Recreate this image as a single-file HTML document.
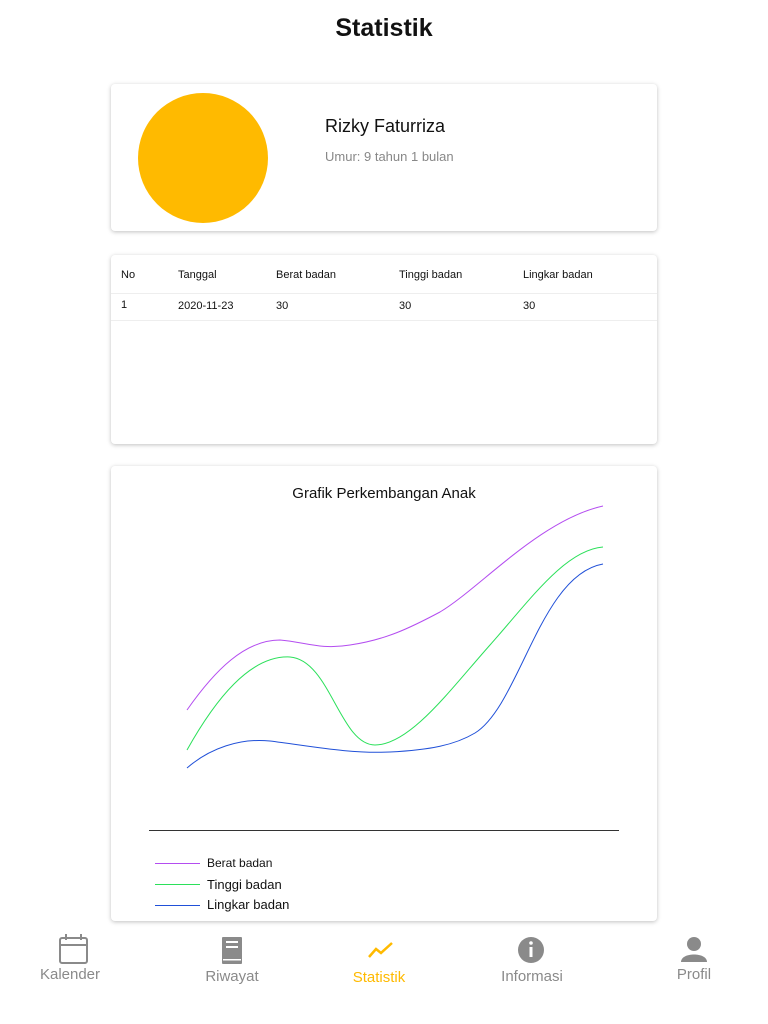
<!DOCTYPE html>
<html><head><style>
body{margin:0;width:768px;height:1024px;background:#fff;font-family:"Liberation Sans",sans-serif;position:relative;overflow:hidden}
.card{position:absolute;left:111px;width:546px;background:#fff;border-radius:4px;box-shadow:0 1px 4px rgba(0,0,0,.25)}
.t{position:absolute;font-size:11px;color:#111}
.nav{position:absolute;text-align:center;font-size:15px;color:#8a8a8a;width:120px}
</style></head><body>
<div style="position:absolute;top:14px;width:768px;text-align:center;font-size:25px;font-weight:bold;color:#111">Statistik</div>
<div class="card" style="top:84px;height:147px">
 <div style="position:absolute;left:27px;top:9px;width:130px;height:130px;border-radius:50%;background:#ffba00"></div>
 <div style="position:absolute;left:214px;top:32px;font-size:18px;color:#111">Rizky Faturriza</div>
 <div style="position:absolute;left:214px;top:65px;font-size:13px;color:#888">Umur: 9 tahun 1 bulan</div>
</div>
<div class="card" style="top:255px;height:189px">
 <div class="t" style="left:10px;top:14px">No</div><div class="t" style="left:67px;top:14px">Tanggal</div><div class="t" style="left:165px;top:14px">Berat badan</div><div class="t" style="left:288px;top:14px">Tinggi badan</div><div class="t" style="left:412px;top:14px">Lingkar badan</div>
 <div style="position:absolute;left:0;right:0;top:38px;border-top:1px solid #eee"></div>
 <div class="t" style="left:10px;top:44px">1</div><div class="t" style="left:67px;top:45px">2020-11-23</div><div class="t" style="left:165px;top:45px">30</div><div class="t" style="left:288px;top:45px">30</div><div class="t" style="left:412px;top:45px">30</div>
 <div style="position:absolute;left:0;right:0;top:65px;border-top:1px solid #eee"></div>
</div>
<div class="card" style="top:466px;height:455px"></div>
<div style="position:absolute;top:485px;left:111px;width:546px;text-align:center;font-size:15px;color:#111">Grafik Perkembangan Anak</div>
<svg style="position:absolute;left:0;top:0" width="768" height="1024">
<path d="M187,710 C215,670 245,640 280,640 C305,642 320,650 350,645 C385,640 410,628 440,612 C480,588 540,520 603,506" fill="none" stroke="#b44df0" stroke-width="1"/>
<path d="M187,750 C215,700 250,655 290,657 C330,660 340,745 375,745 C410,745 450,690 490,645 C530,600 565,550 603,547" fill="none" stroke="#2be05a" stroke-width="1"/>
<path d="M187,768 C210,748 240,738 270,741 C310,746 350,754 390,752 C430,750 455,745 475,733 C520,705 540,575 603,564" fill="none" stroke="#2050d8" stroke-width="1"/>
<line x1="149" y1="830.5" x2="619" y2="830.5" stroke="#333"/>
<line x1="155" y1="863.5" x2="200" y2="863.5" stroke="#b44df0"/>
<line x1="155" y1="884.5" x2="200" y2="884.5" stroke="#2be05a"/>
<line x1="155" y1="905.5" x2="200" y2="905.5" stroke="#2050d8"/>
<text x="207" y="867" font-size="12" fill="#111" font-family="Liberation Sans">Berat badan</text>
<text x="207" y="889" font-size="13" fill="#111" font-family="Liberation Sans">Tinggi badan</text>
<text x="207" y="909" font-size="13" fill="#111" font-family="Liberation Sans">Lingkar badan</text>
<!-- icons -->
<rect x="60" y="938" width="27" height="25" rx="2" fill="none" stroke="#8a8a8a" stroke-width="2"/>
<line x1="60" y1="945" x2="87" y2="945" stroke="#8a8a8a" stroke-width="2"/>
<line x1="66" y1="934" x2="66" y2="940" stroke="#8a8a8a" stroke-width="2"/><line x1="81" y1="934" x2="81" y2="940" stroke="#8a8a8a" stroke-width="2"/>
<rect x="222" y="937" width="20" height="27" rx="1" fill="#8a8a8a"/>
<rect x="226" y="941" width="12" height="2" fill="#fff"/><rect x="226" y="946" width="12" height="2" fill="#fff"/><rect x="223" y="959" width="18" height="1.5" fill="#fff"/>
<polyline points="369,957 376,949 381,953 392,943" fill="none" stroke="#ffba00" stroke-width="2.5"/>
<circle cx="531" cy="950" r="13" fill="#8a8a8a"/><rect x="529.5" y="947" width="3" height="10" fill="#fff"/><circle cx="531" cy="943" r="1.8" fill="#fff"/>
<circle cx="694" cy="944" r="7" fill="#8a8a8a"/><path d="M681,962 C681,952 707,952 707,962 Z" fill="#8a8a8a"/>
</svg>
<div class="nav" style="left:10px;top:966px">Kalender</div>
<div class="nav" style="left:172px;top:968px">Riwayat</div>
<div class="nav" style="left:319px;top:969px;color:#ffba00">Statistik</div>
<div class="nav" style="left:472px;top:968px">Informasi</div>
<div class="nav" style="left:634px;top:966px">Profil</div>
</body></html>
